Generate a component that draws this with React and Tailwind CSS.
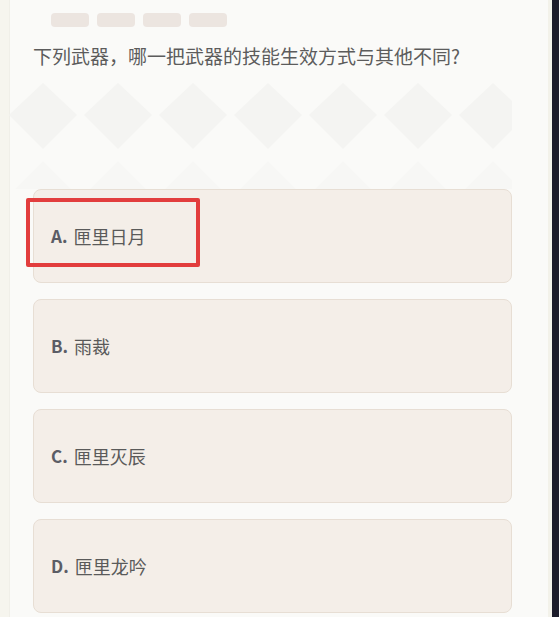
import React from 'react'

const font = { fontFamily: '"Noto Sans CJK SC", "Liberation Sans", sans-serif' }

const options = [
  { key: 'A', text: '匣里日月' },
  { key: 'B', text: '雨裁' },
  { key: 'C', text: '匣里灭辰' },
  { key: 'D', text: '匣里龙吟' },
]

// faint diamond band under the question
const Diamonds = () => (
  <svg width="530" height="116" viewBox="0 0 530 116">
    {[0, 1, 2, 3, 4, 5, 6, 7].map(i => (
      <polygon key={i} points={`${i * 75 + 38},10 ${i * 75 + 72},42 ${i * 75 + 38},76 ${i * 75 + 4},42`} fill="#f4f4f2" />
    ))}
    {[0, 1, 2, 3, 4, 5, 6, 7].map(i => (
      <polygon key={'b' + i} points={`${i * 75 + 38},88 ${i * 75 + 72},122 ${i * 75 + 38},156 ${i * 75 + 4},122`} fill="#f7f7f5" />
    ))}
  </svg>
)

export default function App() {
  return (
    <div className="w-[559px] h-[617px] overflow-hidden flex bg-[#fafaf8]" style={font}>
      <div className="w-[10px] shrink-0 bg-[#f6f5ee] border-r border-[#f0efe8]" />
      <div className="flex-1 min-w-0 flex flex-col pl-[23px] pr-[36px]">
        <div className="flex gap-2 pt-[13px] pl-[18px]">
          <div className="w-[38px] h-[14px] rounded-sm bg-[#ece5e0]" />
          <div className="w-[38px] h-[14px] rounded-sm bg-[#ece5e0]" />
          <div className="w-[38px] h-[14px] rounded-sm bg-[#ece5e0]" />
          <div className="w-[38px] h-[14px] rounded-sm bg-[#ece5e0]" />
        </div>
        <p className="mt-[16px] text-[19px] leading-[26px] text-[#5c5c5c] whitespace-nowrap">下列武器，哪一把武器的技能生效方式与其他不同?</p>
        <div className="mt-[4px] h-[116px] overflow-hidden -ml-[28px]"><Diamonds /></div>
        <div className="flex flex-col gap-[16px]">
          {options.map(o => (
            <div key={o.key} className="relative h-[94px] rounded-lg border border-[#e7ded4] bg-[#f4eee8] flex items-center px-[17px]">
              <span className="text-[17px] font-bold text-[#5b5d66] mr-[6px]">{o.key}.</span>
              <span className="text-[18px] text-[#5a5a5a]">{o.text}</span>
              {o.key === 'A' && (
                <div className="absolute left-[-8px] top-[8px] w-[174px] h-[69px] border-[4px] border-[#e23d3d] rounded-[2px]" />
              )}
            </div>
          ))}
        </div>
      </div>
      <div className="w-[4px] shrink-0 bg-[#f3f2ea]" />
      <div className="w-[7px] shrink-0 bg-[#1c1c2a]" />
    </div>
  )
}
